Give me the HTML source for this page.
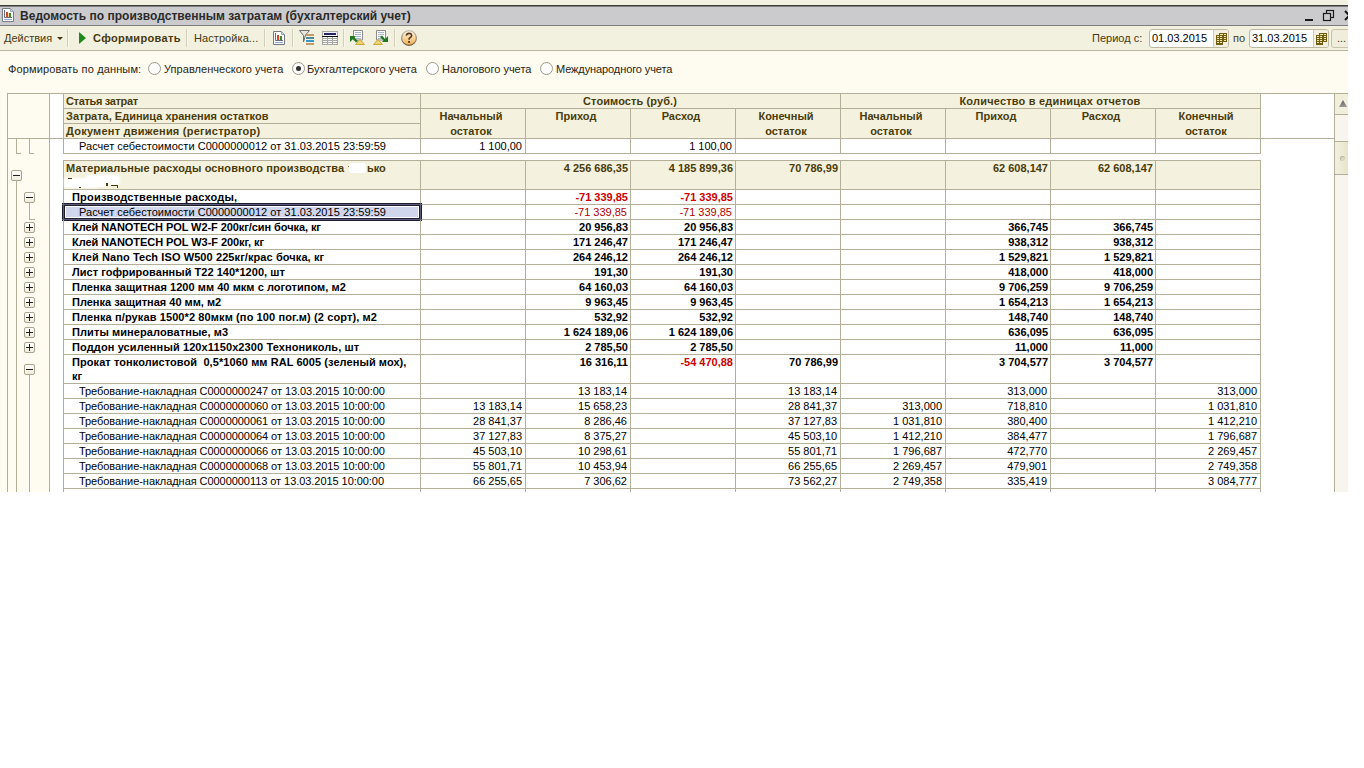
<!DOCTYPE html>
<html><head><meta charset="utf-8"><title>Ведомость</title>
<style>
html,body{margin:0;padding:0}
body{width:1364px;height:768px;position:relative;overflow:hidden;background:#FFFFFF;font-family:"Liberation Sans",sans-serif;font-size:11px}
#w{position:absolute;left:0;top:0;width:1348px;height:492px;background:#FEFBF0;overflow:hidden}
.t{position:absolute;white-space:pre;height:auto}
</style></head><body><div id="w">
<div style="position:absolute;left:0px;top:0px;width:1348px;height:5px;background:#F3F2E2;"></div>
<div style="position:absolute;left:0px;top:5px;width:1348px;height:1px;background:#3E3E3E;"></div>
<div style="position:absolute;left:0px;top:6px;width:1348px;height:1px;background:#7E7E7E;"></div>
<div style="position:absolute;left:0px;top:7px;width:1348px;height:18px;background:#CBCBCD;"></div>
<div style="position:absolute;left:0px;top:25px;width:1348px;height:1px;background:#7C7C7C;"></div>
<svg style="position:absolute;left:2px;top:8px" width="12" height="14" viewBox="0 0 12 14">
<path d="M0.5 0.5 H8.5 L11.5 3.5 V13.5 H0.5 Z" fill="#fff" stroke="#737A84"/>
<path d="M8.5 0.5 V3.5 H11.5" fill="#C8D4E0" stroke="#9AA6B4"/>
<path d="M2.5 2 V9.5 H10" fill="none" stroke="#6A6A78"/>
<rect x="4" y="4" width="2" height="5" fill="#C84A30"/><rect x="6" y="5" width="1" height="4" fill="#F0DC98"/><rect x="7" y="5" width="2" height="4" fill="#3A8A30"/>
<rect x="2" y="11" width="8" height="1" fill="#90A8C8"/></svg>
<div class="t" style="left:20px;top:9px;line-height:15px;font-size:12px;font-weight:bold;color:#2A2A2A;letter-spacing:0.02px">Ведомость по производственным затратам (бухгалтерский учет)</div>
<div style="position:absolute;left:1305px;top:19px;width:8px;height:2px;background:#1A1A1A;"></div>
<svg style="position:absolute;left:1322px;top:9px" width="13" height="13" viewBox="0 0 13 13">
<rect x="4.5" y="1.5" width="7" height="7" fill="none" stroke="#1A1A1A" stroke-width="1.2"/>
<rect x="1.5" y="4.5" width="7" height="7" fill="#CBCBCD" stroke="#1A1A1A" stroke-width="1.2"/></svg>
<svg style="position:absolute;left:1344px;top:10px" width="6" height="12" viewBox="0 0 6 12">
<path d="M1 1 L5 5 M1 10 L5 6" stroke="#1A1A1A" stroke-width="2"/></svg>
<div style="position:absolute;left:0px;top:26px;width:1348px;height:24px;background:#F2F0DE;"></div>
<div style="position:absolute;left:0px;top:50px;width:1348px;height:1px;background:#BAB6A3;"></div>
<div class="t" style="left:4px;top:31px;line-height:14px;color:#463A10">Действия</div>
<svg style="position:absolute;left:57px;top:37px" width="6" height="3" viewBox="0 0 6 3"><path d="M0 0 H6 L3 3 Z" fill="#3C3410"/></svg>
<div style="position:absolute;left:67px;top:29px;width:1px;height:18px;background:#D2CEB9;"></div>
<div style="position:absolute;left:68px;top:29px;width:1px;height:18px;background:#F9F7EC;"></div>
<svg style="position:absolute;left:79px;top:32px" width="7" height="12" viewBox="0 0 7 12"><path d="M0 0 L7 6 L0 12 Z" fill="#1E8A1E"/></svg>
<div class="t" style="left:93px;top:31px;line-height:14px;color:#463A10;font-weight:bold;letter-spacing:0.33px">Сформировать</div>
<div style="position:absolute;left:186px;top:29px;width:1px;height:18px;background:#D2CEB9;"></div>
<div style="position:absolute;left:187px;top:29px;width:1px;height:18px;background:#F9F7EC;"></div>
<div class="t" style="left:194px;top:31px;line-height:14px;color:#463A10;letter-spacing:0.08px">Настройка...</div>
<div style="position:absolute;left:264px;top:29px;width:1px;height:18px;background:#D2CEB9;"></div>
<div style="position:absolute;left:265px;top:29px;width:1px;height:18px;background:#F9F7EC;"></div>
<svg style="position:absolute;left:273px;top:31px" width="12" height="14" viewBox="0 0 12 14">
<path d="M0.5 0.5 H8.5 L11.5 3.5 V13.5 H0.5 Z" fill="#fff" stroke="#737A84"/>
<path d="M8.5 0.5 V3.5 H11.5" fill="#C8D4E0" stroke="#9AA6B4"/>
<path d="M2.5 2 V9.5 H10" fill="none" stroke="#6A6A78"/>
<rect x="4" y="4" width="2" height="5" fill="#C84A30"/><rect x="6" y="5" width="1" height="4" fill="#F0DC98"/><rect x="7" y="5" width="2" height="4" fill="#3A8A30"/>
<rect x="2" y="11" width="8" height="1" fill="#90A8C8"/></svg>
<div style="position:absolute;left:292px;top:29px;width:1px;height:18px;background:#D2CEB9;"></div>
<div style="position:absolute;left:293px;top:29px;width:1px;height:18px;background:#F9F7EC;"></div>
<svg style="position:absolute;left:299px;top:30px" width="16" height="16" viewBox="0 0 16 16">
<path d="M0.5 0.5 H10.5 L6.5 5 L4.5 12 L4.5 5.5 Z" fill="#E6E6E2" stroke="#6E6E6A" stroke-width="1"/>
<rect x="7" y="4" width="8" height="2" fill="#C89A68"/><rect x="7" y="7" width="8" height="2" fill="#4A8C9C"/><rect x="7" y="10" width="8" height="2" fill="#3898C8"/><rect x="7" y="13" width="8" height="2" fill="#C89A68"/></svg>
<svg style="position:absolute;left:322px;top:31px" width="16" height="14" viewBox="0 0 16 14">
<rect x="0" y="0" width="16" height="14" fill="#A8A8A2"/>
<rect x="1" y="1" width="14" height="4" fill="#F4F2FF"/>
<rect x="2" y="2" width="12" height="2" fill="#26245E"/>
<rect x="0" y="5" width="16" height="1" fill="#111"/>
<rect x="1" y="6" width="14" height="1" fill="#fff"/><rect x="1" y="8" width="14" height="1" fill="#fff"/><rect x="1" y="10" width="14" height="1" fill="#fff"/><rect x="1" y="12" width="14" height="1" fill="#fff"/>
<rect x="5" y="6" width="1" height="8" fill="#A8A8A2"/><rect x="10" y="6" width="1" height="8" fill="#A8A8A2"/></svg>
<div style="position:absolute;left:343px;top:29px;width:1px;height:18px;background:#D2CEB9;"></div>
<div style="position:absolute;left:344px;top:29px;width:1px;height:18px;background:#F9F7EC;"></div>
<svg style="position:absolute;left:350px;top:30px" width="16" height="16" viewBox="0 0 16 16">
<path d="M3.5 0.5 H12.5 V10 H3.5 Z" fill="#fff" stroke="#8C8C8C"/>
<path d="M5 2.5 H11 M5 4.5 H11 M6 6.5 H11 M6 8.5 H11" stroke="#A8B4CC"/>
<path d="M5.5 14.5 L10 9.5 L14.5 14.5 Z" fill="#EED46A" stroke="#C9A83A"/>
<path d="M0 6 H6 L4.5 7.5 L8 11 L6 12.5 L3 9 L0 12 Z" fill="#1F7A1F"/></svg>
<svg style="position:absolute;left:373px;top:30px" width="16" height="16" viewBox="0 0 16 16">
<path d="M3.5 0.5 H12.5 V10 H3.5 Z" fill="#fff" stroke="#8C8C8C"/>
<path d="M5 2.5 H11 M5 4.5 H11 M5 6.5 H9 M5 8.5 H9" stroke="#A8B4CC"/>
<path d="M0.5 14.5 L5 9.5 L9.5 14.5 Z" fill="#EED46A" stroke="#C9A83A"/>
<path d="M15 12 L9 12 L10.5 10.5 L7 7 L9 5.5 L12 9 L15 6 Z" fill="#1F7A1F"/></svg>
<div style="position:absolute;left:394px;top:29px;width:1px;height:18px;background:#D2CEB9;"></div>
<div style="position:absolute;left:395px;top:29px;width:1px;height:18px;background:#F9F7EC;"></div>
<svg style="position:absolute;left:401px;top:30px" width="16" height="16" viewBox="0 0 16 16">
<defs><linearGradient id="hg" x1="0" y1="0" x2="0" y2="1"><stop offset="0" stop-color="#FFF6E6"/><stop offset="0.5" stop-color="#F8D49A"/><stop offset="1" stop-color="#F0A850"/></linearGradient>
<linearGradient id="hb" x1="0" y1="0" x2="0" y2="1"><stop offset="0" stop-color="#C8C0B0"/><stop offset="1" stop-color="#6A5A40"/></linearGradient></defs>
<circle cx="8" cy="8" r="7.4" fill="url(#hg)" stroke="url(#hb)" stroke-width="1.1"/>
<path d="M5.3 5.6 Q5.6 3.4 8 3.4 Q10.6 3.4 10.6 5.6 Q10.6 7 8.9 7.8 Q8 8.3 8 9.8" fill="none" stroke="#5A3A20" stroke-width="1.6"/>
<rect x="7" y="11" width="2" height="1.8" fill="#5A3A20"/></svg>
<div class="t" style="left:1092px;top:31px;line-height:14px;color:#463A10">Период с:</div>
<div style="position:absolute;left:1149px;top:29px;width:78px;height:17px;border:1px solid #BDB8A2;border-radius:3px;background:#fff;overflow:hidden"><div style="position:absolute;left:63px;top:0;width:15px;height:17px;background:#F3F0E0;border-left:1px solid #CFCAB5"></div></div>
<svg style="position:absolute;left:1216px;top:33px" width="11" height="12" viewBox="0 0 11 12">
<rect x="3" y="0" width="8" height="9" fill="#6E5E14"/><rect x="4" y="1" width="3" height="1" fill="#F2E6A8"/><rect x="8" y="1" width="2" height="1" fill="#F2E6A8"/><rect x="4" y="3" width="3" height="1" fill="#F2E6A8"/><rect x="8" y="3" width="2" height="1" fill="#F2E6A8"/><rect x="4" y="5" width="3" height="1" fill="#F2E6A8"/><rect x="8" y="5" width="2" height="1" fill="#F2E6A8"/><rect x="4" y="7" width="3" height="1" fill="#F2E6A8"/><rect x="8" y="7" width="2" height="1" fill="#F2E6A8"/><rect x="0" y="2" width="7" height="10" fill="#6E5E14"/><rect x="1" y="3" width="2" height="1" fill="#F2E6A8"/><rect x="4" y="3" width="2" height="1" fill="#F2E6A8"/><rect x="1" y="5" width="2" height="1" fill="#F2E6A8"/><rect x="4" y="5" width="2" height="1" fill="#F2E6A8"/><rect x="1" y="7" width="2" height="1" fill="#F2E6A8"/><rect x="4" y="7" width="2" height="1" fill="#F2E6A8"/><rect x="1" y="9" width="2" height="1" fill="#F2E6A8"/><rect x="4" y="9" width="2" height="1" fill="#F2E6A8"/></svg>
<div class="t" style="left:1152px;top:31px;line-height:14px;color:#000">01.03.2015</div>
<div class="t" style="left:1233px;top:31px;line-height:14px;color:#463A10">по</div>
<div style="position:absolute;left:1249px;top:29px;width:78px;height:17px;border:1px solid #BDB8A2;border-radius:3px;background:#fff;overflow:hidden"><div style="position:absolute;left:63px;top:0;width:15px;height:17px;background:#F3F0E0;border-left:1px solid #CFCAB5"></div></div>
<svg style="position:absolute;left:1316px;top:33px" width="11" height="12" viewBox="0 0 11 12">
<rect x="3" y="0" width="8" height="9" fill="#6E5E14"/><rect x="4" y="1" width="3" height="1" fill="#F2E6A8"/><rect x="8" y="1" width="2" height="1" fill="#F2E6A8"/><rect x="4" y="3" width="3" height="1" fill="#F2E6A8"/><rect x="8" y="3" width="2" height="1" fill="#F2E6A8"/><rect x="4" y="5" width="3" height="1" fill="#F2E6A8"/><rect x="8" y="5" width="2" height="1" fill="#F2E6A8"/><rect x="4" y="7" width="3" height="1" fill="#F2E6A8"/><rect x="8" y="7" width="2" height="1" fill="#F2E6A8"/><rect x="0" y="2" width="7" height="10" fill="#6E5E14"/><rect x="1" y="3" width="2" height="1" fill="#F2E6A8"/><rect x="4" y="3" width="2" height="1" fill="#F2E6A8"/><rect x="1" y="5" width="2" height="1" fill="#F2E6A8"/><rect x="4" y="5" width="2" height="1" fill="#F2E6A8"/><rect x="1" y="7" width="2" height="1" fill="#F2E6A8"/><rect x="4" y="7" width="2" height="1" fill="#F2E6A8"/><rect x="1" y="9" width="2" height="1" fill="#F2E6A8"/><rect x="4" y="9" width="2" height="1" fill="#F2E6A8"/></svg>
<div class="t" style="left:1252px;top:31px;line-height:14px;color:#000">31.03.2015</div>
<div style="position:absolute;left:1331px;top:29px;width:30px;height:17px;border:1px solid #C8C2A8;border-radius:3px;background:#F1EDDC"></div>
<div class="t" style="left:1337px;top:31px;line-height:14px;color:#3C3410">...</div>
<div class="t" style="left:8px;top:62px;line-height:14px;color:#2A2410;letter-spacing:0.136px">Формировать по данным:</div>
<div style="position:absolute;left:148px;top:62px;width:11px;height:11px;border:1px solid #9A9A8A;border-radius:50%;background:#fff"></div>
<div class="t" style="left:164px;top:62px;line-height:14px;color:#2A2410;letter-spacing:0.05px">Управленческого учета</div>
<div style="position:absolute;left:292px;top:62px;width:11px;height:11px;border:1px solid #9A9A8A;border-radius:50%;background:#fff"></div>
<div style="position:absolute;left:296px;top:66px;width:5px;height:5px;border-radius:50%;background:#303030"></div>
<div class="t" style="left:307px;top:62px;line-height:14px;color:#2A2410;letter-spacing:0.05px">Бухгалтерского учета</div>
<div style="position:absolute;left:426px;top:62px;width:11px;height:11px;border:1px solid #9A9A8A;border-radius:50%;background:#fff"></div>
<div class="t" style="left:442px;top:62px;line-height:14px;color:#2A2410">Налогового учета</div>
<div style="position:absolute;left:540px;top:62px;width:11px;height:11px;border:1px solid #9A9A8A;border-radius:50%;background:#fff"></div>
<div class="t" style="left:556px;top:62px;line-height:14px;color:#2A2410;letter-spacing:-0.1px">Международного учета</div>
<div style="position:absolute;left:7px;top:93px;width:1341px;height:399px;background:#FEFBF0;"></div>
<div style="position:absolute;left:50px;top:94px;width:13px;height:398px;background:#FFFFFF;"></div>
<div style="position:absolute;left:63px;top:94px;width:1271px;height:398px;background:#FFFFFF;"></div>
<div style="position:absolute;left:7px;top:93px;width:1342px;height:1px;background:#B3AF99;"></div>
<div style="position:absolute;left:7px;top:93px;width:1px;height:399px;background:#B3AF99;"></div>
<div style="position:absolute;left:49px;top:94px;width:1px;height:398px;background:#B3AF99;"></div>
<div style="position:absolute;left:64px;top:94px;width:1196px;height:44px;background:#F4F1DE;"></div>
<div style="position:absolute;left:8px;top:138px;width:1327px;height:1px;background:#B3AF99;"></div>
<div style="position:absolute;left:63px;top:94px;width:1px;height:60px;background:#B3AF99;"></div>
<div style="position:absolute;left:63px;top:108px;width:358px;height:1px;background:#B3AF99;"></div>
<div style="position:absolute;left:63px;top:123px;width:358px;height:1px;background:#B3AF99;"></div>
<div style="position:absolute;left:420px;top:108px;width:841px;height:1px;background:#B3AF99;"></div>
<div style="position:absolute;left:420px;top:94px;width:1px;height:44px;background:#B3AF99;"></div>
<div style="position:absolute;left:840px;top:94px;width:1px;height:44px;background:#B3AF99;"></div>
<div style="position:absolute;left:1260px;top:94px;width:1px;height:44px;background:#B3AF99;"></div>
<div style="position:absolute;left:525px;top:108px;width:1px;height:30px;background:#B3AF99;"></div>
<div style="position:absolute;left:630px;top:108px;width:1px;height:30px;background:#B3AF99;"></div>
<div style="position:absolute;left:735px;top:108px;width:1px;height:30px;background:#B3AF99;"></div>
<div style="position:absolute;left:945px;top:108px;width:1px;height:30px;background:#B3AF99;"></div>
<div style="position:absolute;left:1050px;top:108px;width:1px;height:30px;background:#B3AF99;"></div>
<div style="position:absolute;left:1155px;top:108px;width:1px;height:30px;background:#B3AF99;"></div>
<div class="t" style="left:66px;top:94px;line-height:14px;color:#4A3C0A;font-weight:bold;letter-spacing:-0.33px">Статья затрат</div>
<div class="t" style="left:66px;top:109px;line-height:14px;color:#4A3C0A;font-weight:bold">Затрата, Единица хранения остатков</div>
<div class="t" style="left:66px;top:124px;line-height:14px;color:#4A3C0A;font-weight:bold;letter-spacing:0.23px">Документ движения (регистратор)</div>
<div class="t" style="left:480px;top:94px;width:300px;text-align:center;line-height:14px;color:#4A3C0A;font-weight:bold;letter-spacing:0.09px">Стоимость (руб.)</div>
<div class="t" style="left:900px;top:94px;width:300px;text-align:center;line-height:14px;color:#4A3C0A;font-weight:bold;letter-spacing:0.2px">Количество в единицах отчетов</div>
<div class="t" style="left:419px;top:109px;width:104px;text-align:center;line-height:14px;color:#4A3C0A;font-weight:bold">Начальный</div>
<div class="t" style="left:419px;top:124px;width:104px;text-align:center;line-height:14px;color:#4A3C0A;font-weight:bold">остаток</div>
<div class="t" style="left:524px;top:109px;width:104px;text-align:center;line-height:14px;color:#4A3C0A;font-weight:bold">Приход</div>
<div class="t" style="left:629px;top:109px;width:104px;text-align:center;line-height:14px;color:#4A3C0A;font-weight:bold">Расход</div>
<div class="t" style="left:734px;top:109px;width:104px;text-align:center;line-height:14px;color:#4A3C0A;font-weight:bold">Конечный</div>
<div class="t" style="left:734px;top:124px;width:104px;text-align:center;line-height:14px;color:#4A3C0A;font-weight:bold">остаток</div>
<div class="t" style="left:839px;top:109px;width:104px;text-align:center;line-height:14px;color:#4A3C0A;font-weight:bold">Начальный</div>
<div class="t" style="left:839px;top:124px;width:104px;text-align:center;line-height:14px;color:#4A3C0A;font-weight:bold">остаток</div>
<div class="t" style="left:944px;top:109px;width:104px;text-align:center;line-height:14px;color:#4A3C0A;font-weight:bold">Приход</div>
<div class="t" style="left:1049px;top:109px;width:104px;text-align:center;line-height:14px;color:#4A3C0A;font-weight:bold">Расход</div>
<div class="t" style="left:1154px;top:109px;width:104px;text-align:center;line-height:14px;color:#4A3C0A;font-weight:bold">Конечный</div>
<div class="t" style="left:1154px;top:124px;width:104px;text-align:center;line-height:14px;color:#4A3C0A;font-weight:bold">остаток</div>
<div style="position:absolute;left:1334px;top:94px;width:1px;height:398px;background:#B3AF99;"></div>
<div style="position:absolute;left:1335px;top:94px;width:13px;height:398px;background:#F7F5EE;"></div>
<div style="position:absolute;left:1335px;top:94px;width:13px;height:20px;background:#F1EEDC;"></div>
<div style="position:absolute;left:1335px;top:114px;width:13px;height:1px;background:#B3AF99;"></div>
<svg style="position:absolute;left:1339px;top:100px" width="8" height="7" viewBox="0 0 8 7"><defs><linearGradient id="sg" x1="0" y1="0" x2="0" y2="1"><stop offset="0" stop-color="#606060"/><stop offset="1" stop-color="#9A9A96"/></linearGradient></defs><path d="M4 0 L8 7 H0 Z" fill="url(#sg)"/></svg>
<div style="position:absolute;left:1335px;top:141px;width:13px;height:1px;background:#B3AF99;"></div>
<div style="position:absolute;left:1335px;top:142px;width:13px;height:32px;background:#EDE9D2;background:linear-gradient(90deg,#F3F0E0,#E8E4CA)"></div>
<div style="position:absolute;left:1335px;top:174px;width:13px;height:1px;background:#B3AF99;"></div>
<div style="position:absolute;left:1340px;top:156px;width:4px;height:4px;border-radius:50%;border-left:1px solid #B8B4A0;border-top:1px solid #B8B4A0;background:#DCD8C4"></div>
<div style="position:absolute;left:63px;top:153px;width:1198px;height:1px;background:#B3AF99;"></div>
<div style="position:absolute;left:63px;top:139px;width:1px;height:14px;background:#B3AF99;"></div>
<div style="position:absolute;left:420px;top:139px;width:1px;height:14px;background:#B3AF99;"></div>
<div style="position:absolute;left:525px;top:139px;width:1px;height:14px;background:#B3AF99;"></div>
<div style="position:absolute;left:630px;top:139px;width:1px;height:14px;background:#B3AF99;"></div>
<div style="position:absolute;left:735px;top:139px;width:1px;height:14px;background:#B3AF99;"></div>
<div style="position:absolute;left:840px;top:139px;width:1px;height:14px;background:#B3AF99;"></div>
<div style="position:absolute;left:945px;top:139px;width:1px;height:14px;background:#B3AF99;"></div>
<div style="position:absolute;left:1050px;top:139px;width:1px;height:14px;background:#B3AF99;"></div>
<div style="position:absolute;left:1155px;top:139px;width:1px;height:14px;background:#B3AF99;"></div>
<div style="position:absolute;left:1260px;top:139px;width:1px;height:14px;background:#B3AF99;"></div>
<div class="t" style="left:79px;top:139px;line-height:14px;color:#000;letter-spacing:0.036px">Расчет себестоимости С0000000012 от 31.03.2015 23:59:59</div>
<div class="t" style="left:222px;top:139px;width:300px;text-align:right;line-height:14px;color:#000">1 100,00</div>
<div class="t" style="left:432px;top:139px;width:300px;text-align:right;line-height:14px;color:#000">1 100,00</div>
<div style="position:absolute;left:16px;top:139px;width:1px;height:15px;background:#B3AF99;"></div>
<div style="position:absolute;left:16px;top:153px;width:5px;height:1px;background:#B3AF99;"></div>
<div style="position:absolute;left:29px;top:139px;width:1px;height:15px;background:#B3AF99;"></div>
<div style="position:absolute;left:29px;top:153px;width:5px;height:1px;background:#B3AF99;"></div>
<div style="position:absolute;left:63px;top:160px;width:1198px;height:1px;background:#B3AF99;"></div>
<div style="position:absolute;left:64px;top:161px;width:1196px;height:28px;background:#F4F1DE;"></div>
<div style="position:absolute;left:63px;top:189px;width:1198px;height:1px;background:#B3AF99;"></div>
<div style="position:absolute;left:63px;top:161px;width:1px;height:28px;background:#B3AF99;"></div>
<div style="position:absolute;left:420px;top:161px;width:1px;height:28px;background:#B3AF99;"></div>
<div style="position:absolute;left:525px;top:161px;width:1px;height:28px;background:#B3AF99;"></div>
<div style="position:absolute;left:630px;top:161px;width:1px;height:28px;background:#B3AF99;"></div>
<div style="position:absolute;left:735px;top:161px;width:1px;height:28px;background:#B3AF99;"></div>
<div style="position:absolute;left:840px;top:161px;width:1px;height:28px;background:#B3AF99;"></div>
<div style="position:absolute;left:945px;top:161px;width:1px;height:28px;background:#B3AF99;"></div>
<div style="position:absolute;left:1050px;top:161px;width:1px;height:28px;background:#B3AF99;"></div>
<div style="position:absolute;left:1155px;top:161px;width:1px;height:28px;background:#B3AF99;"></div>
<div style="position:absolute;left:1260px;top:161px;width:1px;height:28px;background:#B3AF99;"></div>
<div class="t" style="left:66px;top:161px;line-height:14px;color:#4A3C0A;font-weight:bold;letter-spacing:0.119px">Материальные расходы основного производства</div>
<div class="t" style="left:367px;top:161px;line-height:14px;color:#4A3C0A;font-weight:bold">ько</div>
<div style="position:absolute;left:349px;top:163px;width:17px;height:10px;background:#FFFFFF;border-radius:3px"></div>
<div style="position:absolute;left:348px;top:166px;width:1px;height:1px;background:#8A7A50;"></div>
<div style="position:absolute;left:64px;top:178px;width:34px;height:10px;background:#FFFFFF;border-radius:2px;filter:blur(0.8px)"></div>
<div style="position:absolute;left:86px;top:175px;width:34px;height:10px;background:#FFFFFF;border-radius:3px;filter:blur(0.8px)"></div>
<div style="position:absolute;left:66px;top:180px;width:40px;height:7px;background:#FFFFFF;"></div>
<div style="position:absolute;left:68px;top:178px;width:4px;height:1px;background:#4A3C0A;"></div>
<div style="position:absolute;left:79px;top:187px;width:2px;height:1px;background:#4A3C0A;"></div>
<div style="position:absolute;left:106px;top:183px;width:2px;height:3px;background:#4A3C0A;"></div>
<div style="position:absolute;left:111px;top:185px;width:7px;height:1px;background:#4A3C0A;"></div>
<div style="position:absolute;left:117px;top:185px;width:1px;height:3px;background:#4A3C0A;"></div>
<div class="t" style="left:328px;top:161px;width:300px;text-align:right;line-height:14px;color:#4A3C0A;font-weight:bold">4 256 686,35</div>
<div class="t" style="left:433px;top:161px;width:300px;text-align:right;line-height:14px;color:#4A3C0A;font-weight:bold">4 185 899,36</div>
<div class="t" style="left:538px;top:161px;width:300px;text-align:right;line-height:14px;color:#4A3C0A;font-weight:bold">70 786,99</div>
<div class="t" style="left:748px;top:161px;width:300px;text-align:right;line-height:14px;color:#4A3C0A;font-weight:bold">62 608,147</div>
<div class="t" style="left:853px;top:161px;width:300px;text-align:right;line-height:14px;color:#4A3C0A;font-weight:bold">62 608,147</div>
<div style="position:absolute;left:11px;top:170px;width:9px;height:9px;border:1px solid #A8A48E;border-radius:2px;background:linear-gradient(#FFFFFF,#F0ECDC)"></div>
<div style="position:absolute;left:13px;top:175px;width:7px;height:1px;background:#202020;"></div>
<div style="position:absolute;left:16px;top:181px;width:1px;height:311px;background:#B3AF99;"></div>
<div style="position:absolute;left:63px;top:204px;width:1198px;height:1px;background:#B3AF99;"></div>
<div style="position:absolute;left:63px;top:190px;width:1px;height:14px;background:#B3AF99;"></div>
<div style="position:absolute;left:420px;top:190px;width:1px;height:14px;background:#B3AF99;"></div>
<div style="position:absolute;left:525px;top:190px;width:1px;height:14px;background:#B3AF99;"></div>
<div style="position:absolute;left:630px;top:190px;width:1px;height:14px;background:#B3AF99;"></div>
<div style="position:absolute;left:735px;top:190px;width:1px;height:14px;background:#B3AF99;"></div>
<div style="position:absolute;left:840px;top:190px;width:1px;height:14px;background:#B3AF99;"></div>
<div style="position:absolute;left:945px;top:190px;width:1px;height:14px;background:#B3AF99;"></div>
<div style="position:absolute;left:1050px;top:190px;width:1px;height:14px;background:#B3AF99;"></div>
<div style="position:absolute;left:1155px;top:190px;width:1px;height:14px;background:#B3AF99;"></div>
<div style="position:absolute;left:1260px;top:190px;width:1px;height:14px;background:#B3AF99;"></div>
<div class="t" style="left:72px;top:190px;line-height:14px;color:#000;font-weight:bold;letter-spacing:0.2px">Производственные расходы,</div>
<div class="t" style="left:328px;top:190px;width:300px;text-align:right;line-height:14px;color:#CC0000;font-weight:bold">-71 339,85</div>
<div class="t" style="left:433px;top:190px;width:300px;text-align:right;line-height:14px;color:#CC0000;font-weight:bold">-71 339,85</div>
<div style="position:absolute;left:24px;top:192px;width:9px;height:9px;border:1px solid #A8A48E;border-radius:2px;background:linear-gradient(#FFFFFF,#F0ECDC)"></div>
<div style="position:absolute;left:26px;top:197px;width:7px;height:1px;background:#202020;"></div>
<div style="position:absolute;left:29px;top:203px;width:1px;height:17px;background:#B3AF99;"></div>
<div style="position:absolute;left:29px;top:219px;width:6px;height:1px;background:#B3AF99;"></div>
<div style="position:absolute;left:63px;top:219px;width:1198px;height:1px;background:#B3AF99;"></div>
<div style="position:absolute;left:63px;top:205px;width:1px;height:14px;background:#B3AF99;"></div>
<div style="position:absolute;left:420px;top:205px;width:1px;height:14px;background:#B3AF99;"></div>
<div style="position:absolute;left:525px;top:205px;width:1px;height:14px;background:#B3AF99;"></div>
<div style="position:absolute;left:630px;top:205px;width:1px;height:14px;background:#B3AF99;"></div>
<div style="position:absolute;left:735px;top:205px;width:1px;height:14px;background:#B3AF99;"></div>
<div style="position:absolute;left:840px;top:205px;width:1px;height:14px;background:#B3AF99;"></div>
<div style="position:absolute;left:945px;top:205px;width:1px;height:14px;background:#B3AF99;"></div>
<div style="position:absolute;left:1050px;top:205px;width:1px;height:14px;background:#B3AF99;"></div>
<div style="position:absolute;left:1155px;top:205px;width:1px;height:14px;background:#B3AF99;"></div>
<div style="position:absolute;left:1260px;top:205px;width:1px;height:14px;background:#B3AF99;"></div>
<div class="t" style="left:327px;top:205px;width:300px;text-align:right;line-height:14px;color:#B00000">-71 339,85</div>
<div class="t" style="left:432px;top:205px;width:300px;text-align:right;line-height:14px;color:#B00000">-71 339,85</div>
<div style="position:absolute;left:62px;top:203px;width:354px;height:12px;border:3px solid #1C1C2E;background:#D0D6EC;box-shadow:inset 0 0 0 1px #fff"></div>
<div style="position:absolute;left:62px;top:204px;width:360px;height:1px;background:#5E5E78;"></div>
<div style="position:absolute;left:62px;top:219px;width:360px;height:1px;background:#5E5E78;"></div>
<div style="position:absolute;left:63px;top:203px;width:1px;height:18px;background:#5E5E78;"></div>
<div style="position:absolute;left:420px;top:203px;width:1px;height:18px;background:#5E5E78;"></div>
<div class="t" style="left:79px;top:205px;line-height:14px;color:#000;letter-spacing:0.036px">Расчет себестоимости С0000000012 от 31.03.2015 23:59:59</div>
<div style="position:absolute;left:63px;top:234px;width:1198px;height:1px;background:#B3AF99;"></div>
<div style="position:absolute;left:63px;top:220px;width:1px;height:14px;background:#B3AF99;"></div>
<div style="position:absolute;left:420px;top:220px;width:1px;height:14px;background:#B3AF99;"></div>
<div style="position:absolute;left:525px;top:220px;width:1px;height:14px;background:#B3AF99;"></div>
<div style="position:absolute;left:630px;top:220px;width:1px;height:14px;background:#B3AF99;"></div>
<div style="position:absolute;left:735px;top:220px;width:1px;height:14px;background:#B3AF99;"></div>
<div style="position:absolute;left:840px;top:220px;width:1px;height:14px;background:#B3AF99;"></div>
<div style="position:absolute;left:945px;top:220px;width:1px;height:14px;background:#B3AF99;"></div>
<div style="position:absolute;left:1050px;top:220px;width:1px;height:14px;background:#B3AF99;"></div>
<div style="position:absolute;left:1155px;top:220px;width:1px;height:14px;background:#B3AF99;"></div>
<div style="position:absolute;left:1260px;top:220px;width:1px;height:14px;background:#B3AF99;"></div>
<div class="t" style="left:72px;top:220px;line-height:14px;color:#000;font-weight:bold;letter-spacing:-0.07px">Клей NANOTECH POL W2-F 200кг/син бочка, кг</div>
<div class="t" style="left:328px;top:220px;width:300px;text-align:right;line-height:14px;color:#000;font-weight:bold">20 956,83</div>
<div class="t" style="left:433px;top:220px;width:300px;text-align:right;line-height:14px;color:#000;font-weight:bold">20 956,83</div>
<div class="t" style="left:748px;top:220px;width:300px;text-align:right;line-height:14px;color:#000;font-weight:bold">366,745</div>
<div class="t" style="left:853px;top:220px;width:300px;text-align:right;line-height:14px;color:#000;font-weight:bold">366,745</div>
<div style="position:absolute;left:24px;top:222px;width:9px;height:9px;border:1px solid #A8A48E;border-radius:2px;background:linear-gradient(#FFFFFF,#F0ECDC)"></div>
<div style="position:absolute;left:26px;top:227px;width:7px;height:1px;background:#202020;"></div>
<div style="position:absolute;left:29px;top:224px;width:1px;height:7px;background:#202020;"></div>
<div style="position:absolute;left:63px;top:249px;width:1198px;height:1px;background:#B3AF99;"></div>
<div style="position:absolute;left:63px;top:235px;width:1px;height:14px;background:#B3AF99;"></div>
<div style="position:absolute;left:420px;top:235px;width:1px;height:14px;background:#B3AF99;"></div>
<div style="position:absolute;left:525px;top:235px;width:1px;height:14px;background:#B3AF99;"></div>
<div style="position:absolute;left:630px;top:235px;width:1px;height:14px;background:#B3AF99;"></div>
<div style="position:absolute;left:735px;top:235px;width:1px;height:14px;background:#B3AF99;"></div>
<div style="position:absolute;left:840px;top:235px;width:1px;height:14px;background:#B3AF99;"></div>
<div style="position:absolute;left:945px;top:235px;width:1px;height:14px;background:#B3AF99;"></div>
<div style="position:absolute;left:1050px;top:235px;width:1px;height:14px;background:#B3AF99;"></div>
<div style="position:absolute;left:1155px;top:235px;width:1px;height:14px;background:#B3AF99;"></div>
<div style="position:absolute;left:1260px;top:235px;width:1px;height:14px;background:#B3AF99;"></div>
<div class="t" style="left:72px;top:235px;line-height:14px;color:#000;font-weight:bold;letter-spacing:-0.06px">Клей NANOTECH POL W3-F 200кг, кг</div>
<div class="t" style="left:328px;top:235px;width:300px;text-align:right;line-height:14px;color:#000;font-weight:bold">171 246,47</div>
<div class="t" style="left:433px;top:235px;width:300px;text-align:right;line-height:14px;color:#000;font-weight:bold">171 246,47</div>
<div class="t" style="left:748px;top:235px;width:300px;text-align:right;line-height:14px;color:#000;font-weight:bold">938,312</div>
<div class="t" style="left:853px;top:235px;width:300px;text-align:right;line-height:14px;color:#000;font-weight:bold">938,312</div>
<div style="position:absolute;left:24px;top:237px;width:9px;height:9px;border:1px solid #A8A48E;border-radius:2px;background:linear-gradient(#FFFFFF,#F0ECDC)"></div>
<div style="position:absolute;left:26px;top:242px;width:7px;height:1px;background:#202020;"></div>
<div style="position:absolute;left:29px;top:239px;width:1px;height:7px;background:#202020;"></div>
<div style="position:absolute;left:63px;top:264px;width:1198px;height:1px;background:#B3AF99;"></div>
<div style="position:absolute;left:63px;top:250px;width:1px;height:14px;background:#B3AF99;"></div>
<div style="position:absolute;left:420px;top:250px;width:1px;height:14px;background:#B3AF99;"></div>
<div style="position:absolute;left:525px;top:250px;width:1px;height:14px;background:#B3AF99;"></div>
<div style="position:absolute;left:630px;top:250px;width:1px;height:14px;background:#B3AF99;"></div>
<div style="position:absolute;left:735px;top:250px;width:1px;height:14px;background:#B3AF99;"></div>
<div style="position:absolute;left:840px;top:250px;width:1px;height:14px;background:#B3AF99;"></div>
<div style="position:absolute;left:945px;top:250px;width:1px;height:14px;background:#B3AF99;"></div>
<div style="position:absolute;left:1050px;top:250px;width:1px;height:14px;background:#B3AF99;"></div>
<div style="position:absolute;left:1155px;top:250px;width:1px;height:14px;background:#B3AF99;"></div>
<div style="position:absolute;left:1260px;top:250px;width:1px;height:14px;background:#B3AF99;"></div>
<div class="t" style="left:72px;top:250px;line-height:14px;color:#000;font-weight:bold;letter-spacing:0.09px">Клей Nano Tech ISO W500 225кг/крас бочка, кг</div>
<div class="t" style="left:328px;top:250px;width:300px;text-align:right;line-height:14px;color:#000;font-weight:bold">264 246,12</div>
<div class="t" style="left:433px;top:250px;width:300px;text-align:right;line-height:14px;color:#000;font-weight:bold">264 246,12</div>
<div class="t" style="left:748px;top:250px;width:300px;text-align:right;line-height:14px;color:#000;font-weight:bold">1 529,821</div>
<div class="t" style="left:853px;top:250px;width:300px;text-align:right;line-height:14px;color:#000;font-weight:bold">1 529,821</div>
<div style="position:absolute;left:24px;top:252px;width:9px;height:9px;border:1px solid #A8A48E;border-radius:2px;background:linear-gradient(#FFFFFF,#F0ECDC)"></div>
<div style="position:absolute;left:26px;top:257px;width:7px;height:1px;background:#202020;"></div>
<div style="position:absolute;left:29px;top:254px;width:1px;height:7px;background:#202020;"></div>
<div style="position:absolute;left:63px;top:279px;width:1198px;height:1px;background:#B3AF99;"></div>
<div style="position:absolute;left:63px;top:265px;width:1px;height:14px;background:#B3AF99;"></div>
<div style="position:absolute;left:420px;top:265px;width:1px;height:14px;background:#B3AF99;"></div>
<div style="position:absolute;left:525px;top:265px;width:1px;height:14px;background:#B3AF99;"></div>
<div style="position:absolute;left:630px;top:265px;width:1px;height:14px;background:#B3AF99;"></div>
<div style="position:absolute;left:735px;top:265px;width:1px;height:14px;background:#B3AF99;"></div>
<div style="position:absolute;left:840px;top:265px;width:1px;height:14px;background:#B3AF99;"></div>
<div style="position:absolute;left:945px;top:265px;width:1px;height:14px;background:#B3AF99;"></div>
<div style="position:absolute;left:1050px;top:265px;width:1px;height:14px;background:#B3AF99;"></div>
<div style="position:absolute;left:1155px;top:265px;width:1px;height:14px;background:#B3AF99;"></div>
<div style="position:absolute;left:1260px;top:265px;width:1px;height:14px;background:#B3AF99;"></div>
<div class="t" style="left:72px;top:265px;line-height:14px;color:#000;font-weight:bold;letter-spacing:0.03px">Лист гофрированный Т22 140*1200, шт</div>
<div class="t" style="left:328px;top:265px;width:300px;text-align:right;line-height:14px;color:#000;font-weight:bold">191,30</div>
<div class="t" style="left:433px;top:265px;width:300px;text-align:right;line-height:14px;color:#000;font-weight:bold">191,30</div>
<div class="t" style="left:748px;top:265px;width:300px;text-align:right;line-height:14px;color:#000;font-weight:bold">418,000</div>
<div class="t" style="left:853px;top:265px;width:300px;text-align:right;line-height:14px;color:#000;font-weight:bold">418,000</div>
<div style="position:absolute;left:24px;top:267px;width:9px;height:9px;border:1px solid #A8A48E;border-radius:2px;background:linear-gradient(#FFFFFF,#F0ECDC)"></div>
<div style="position:absolute;left:26px;top:272px;width:7px;height:1px;background:#202020;"></div>
<div style="position:absolute;left:29px;top:269px;width:1px;height:7px;background:#202020;"></div>
<div style="position:absolute;left:63px;top:294px;width:1198px;height:1px;background:#B3AF99;"></div>
<div style="position:absolute;left:63px;top:280px;width:1px;height:14px;background:#B3AF99;"></div>
<div style="position:absolute;left:420px;top:280px;width:1px;height:14px;background:#B3AF99;"></div>
<div style="position:absolute;left:525px;top:280px;width:1px;height:14px;background:#B3AF99;"></div>
<div style="position:absolute;left:630px;top:280px;width:1px;height:14px;background:#B3AF99;"></div>
<div style="position:absolute;left:735px;top:280px;width:1px;height:14px;background:#B3AF99;"></div>
<div style="position:absolute;left:840px;top:280px;width:1px;height:14px;background:#B3AF99;"></div>
<div style="position:absolute;left:945px;top:280px;width:1px;height:14px;background:#B3AF99;"></div>
<div style="position:absolute;left:1050px;top:280px;width:1px;height:14px;background:#B3AF99;"></div>
<div style="position:absolute;left:1155px;top:280px;width:1px;height:14px;background:#B3AF99;"></div>
<div style="position:absolute;left:1260px;top:280px;width:1px;height:14px;background:#B3AF99;"></div>
<div class="t" style="left:72px;top:280px;line-height:14px;color:#000;font-weight:bold;letter-spacing:0.044px">Пленка защитная 1200 мм 40 мкм с логотипом, м2</div>
<div class="t" style="left:328px;top:280px;width:300px;text-align:right;line-height:14px;color:#000;font-weight:bold">64 160,03</div>
<div class="t" style="left:433px;top:280px;width:300px;text-align:right;line-height:14px;color:#000;font-weight:bold">64 160,03</div>
<div class="t" style="left:748px;top:280px;width:300px;text-align:right;line-height:14px;color:#000;font-weight:bold">9 706,259</div>
<div class="t" style="left:853px;top:280px;width:300px;text-align:right;line-height:14px;color:#000;font-weight:bold">9 706,259</div>
<div style="position:absolute;left:24px;top:282px;width:9px;height:9px;border:1px solid #A8A48E;border-radius:2px;background:linear-gradient(#FFFFFF,#F0ECDC)"></div>
<div style="position:absolute;left:26px;top:287px;width:7px;height:1px;background:#202020;"></div>
<div style="position:absolute;left:29px;top:284px;width:1px;height:7px;background:#202020;"></div>
<div style="position:absolute;left:63px;top:309px;width:1198px;height:1px;background:#B3AF99;"></div>
<div style="position:absolute;left:63px;top:295px;width:1px;height:14px;background:#B3AF99;"></div>
<div style="position:absolute;left:420px;top:295px;width:1px;height:14px;background:#B3AF99;"></div>
<div style="position:absolute;left:525px;top:295px;width:1px;height:14px;background:#B3AF99;"></div>
<div style="position:absolute;left:630px;top:295px;width:1px;height:14px;background:#B3AF99;"></div>
<div style="position:absolute;left:735px;top:295px;width:1px;height:14px;background:#B3AF99;"></div>
<div style="position:absolute;left:840px;top:295px;width:1px;height:14px;background:#B3AF99;"></div>
<div style="position:absolute;left:945px;top:295px;width:1px;height:14px;background:#B3AF99;"></div>
<div style="position:absolute;left:1050px;top:295px;width:1px;height:14px;background:#B3AF99;"></div>
<div style="position:absolute;left:1155px;top:295px;width:1px;height:14px;background:#B3AF99;"></div>
<div style="position:absolute;left:1260px;top:295px;width:1px;height:14px;background:#B3AF99;"></div>
<div class="t" style="left:72px;top:295px;line-height:14px;color:#000;font-weight:bold">Пленка защитная 40 мм, м2</div>
<div class="t" style="left:328px;top:295px;width:300px;text-align:right;line-height:14px;color:#000;font-weight:bold">9 963,45</div>
<div class="t" style="left:433px;top:295px;width:300px;text-align:right;line-height:14px;color:#000;font-weight:bold">9 963,45</div>
<div class="t" style="left:748px;top:295px;width:300px;text-align:right;line-height:14px;color:#000;font-weight:bold">1 654,213</div>
<div class="t" style="left:853px;top:295px;width:300px;text-align:right;line-height:14px;color:#000;font-weight:bold">1 654,213</div>
<div style="position:absolute;left:24px;top:297px;width:9px;height:9px;border:1px solid #A8A48E;border-radius:2px;background:linear-gradient(#FFFFFF,#F0ECDC)"></div>
<div style="position:absolute;left:26px;top:302px;width:7px;height:1px;background:#202020;"></div>
<div style="position:absolute;left:29px;top:299px;width:1px;height:7px;background:#202020;"></div>
<div style="position:absolute;left:63px;top:324px;width:1198px;height:1px;background:#B3AF99;"></div>
<div style="position:absolute;left:63px;top:310px;width:1px;height:14px;background:#B3AF99;"></div>
<div style="position:absolute;left:420px;top:310px;width:1px;height:14px;background:#B3AF99;"></div>
<div style="position:absolute;left:525px;top:310px;width:1px;height:14px;background:#B3AF99;"></div>
<div style="position:absolute;left:630px;top:310px;width:1px;height:14px;background:#B3AF99;"></div>
<div style="position:absolute;left:735px;top:310px;width:1px;height:14px;background:#B3AF99;"></div>
<div style="position:absolute;left:840px;top:310px;width:1px;height:14px;background:#B3AF99;"></div>
<div style="position:absolute;left:945px;top:310px;width:1px;height:14px;background:#B3AF99;"></div>
<div style="position:absolute;left:1050px;top:310px;width:1px;height:14px;background:#B3AF99;"></div>
<div style="position:absolute;left:1155px;top:310px;width:1px;height:14px;background:#B3AF99;"></div>
<div style="position:absolute;left:1260px;top:310px;width:1px;height:14px;background:#B3AF99;"></div>
<div class="t" style="left:72px;top:310px;line-height:14px;color:#000;font-weight:bold;letter-spacing:0.11px">Пленка п/рукав 1500*2 80мкм (по 100 пог.м) (2 сорт), м2</div>
<div class="t" style="left:328px;top:310px;width:300px;text-align:right;line-height:14px;color:#000;font-weight:bold">532,92</div>
<div class="t" style="left:433px;top:310px;width:300px;text-align:right;line-height:14px;color:#000;font-weight:bold">532,92</div>
<div class="t" style="left:748px;top:310px;width:300px;text-align:right;line-height:14px;color:#000;font-weight:bold">148,740</div>
<div class="t" style="left:853px;top:310px;width:300px;text-align:right;line-height:14px;color:#000;font-weight:bold">148,740</div>
<div style="position:absolute;left:24px;top:312px;width:9px;height:9px;border:1px solid #A8A48E;border-radius:2px;background:linear-gradient(#FFFFFF,#F0ECDC)"></div>
<div style="position:absolute;left:26px;top:317px;width:7px;height:1px;background:#202020;"></div>
<div style="position:absolute;left:29px;top:314px;width:1px;height:7px;background:#202020;"></div>
<div style="position:absolute;left:63px;top:339px;width:1198px;height:1px;background:#B3AF99;"></div>
<div style="position:absolute;left:63px;top:325px;width:1px;height:14px;background:#B3AF99;"></div>
<div style="position:absolute;left:420px;top:325px;width:1px;height:14px;background:#B3AF99;"></div>
<div style="position:absolute;left:525px;top:325px;width:1px;height:14px;background:#B3AF99;"></div>
<div style="position:absolute;left:630px;top:325px;width:1px;height:14px;background:#B3AF99;"></div>
<div style="position:absolute;left:735px;top:325px;width:1px;height:14px;background:#B3AF99;"></div>
<div style="position:absolute;left:840px;top:325px;width:1px;height:14px;background:#B3AF99;"></div>
<div style="position:absolute;left:945px;top:325px;width:1px;height:14px;background:#B3AF99;"></div>
<div style="position:absolute;left:1050px;top:325px;width:1px;height:14px;background:#B3AF99;"></div>
<div style="position:absolute;left:1155px;top:325px;width:1px;height:14px;background:#B3AF99;"></div>
<div style="position:absolute;left:1260px;top:325px;width:1px;height:14px;background:#B3AF99;"></div>
<div class="t" style="left:72px;top:325px;line-height:14px;color:#000;font-weight:bold;letter-spacing:0.087px">Плиты минераловатные, м3</div>
<div class="t" style="left:328px;top:325px;width:300px;text-align:right;line-height:14px;color:#000;font-weight:bold">1 624 189,06</div>
<div class="t" style="left:433px;top:325px;width:300px;text-align:right;line-height:14px;color:#000;font-weight:bold">1 624 189,06</div>
<div class="t" style="left:748px;top:325px;width:300px;text-align:right;line-height:14px;color:#000;font-weight:bold">636,095</div>
<div class="t" style="left:853px;top:325px;width:300px;text-align:right;line-height:14px;color:#000;font-weight:bold">636,095</div>
<div style="position:absolute;left:24px;top:327px;width:9px;height:9px;border:1px solid #A8A48E;border-radius:2px;background:linear-gradient(#FFFFFF,#F0ECDC)"></div>
<div style="position:absolute;left:26px;top:332px;width:7px;height:1px;background:#202020;"></div>
<div style="position:absolute;left:29px;top:329px;width:1px;height:7px;background:#202020;"></div>
<div style="position:absolute;left:63px;top:354px;width:1198px;height:1px;background:#B3AF99;"></div>
<div style="position:absolute;left:63px;top:340px;width:1px;height:14px;background:#B3AF99;"></div>
<div style="position:absolute;left:420px;top:340px;width:1px;height:14px;background:#B3AF99;"></div>
<div style="position:absolute;left:525px;top:340px;width:1px;height:14px;background:#B3AF99;"></div>
<div style="position:absolute;left:630px;top:340px;width:1px;height:14px;background:#B3AF99;"></div>
<div style="position:absolute;left:735px;top:340px;width:1px;height:14px;background:#B3AF99;"></div>
<div style="position:absolute;left:840px;top:340px;width:1px;height:14px;background:#B3AF99;"></div>
<div style="position:absolute;left:945px;top:340px;width:1px;height:14px;background:#B3AF99;"></div>
<div style="position:absolute;left:1050px;top:340px;width:1px;height:14px;background:#B3AF99;"></div>
<div style="position:absolute;left:1155px;top:340px;width:1px;height:14px;background:#B3AF99;"></div>
<div style="position:absolute;left:1260px;top:340px;width:1px;height:14px;background:#B3AF99;"></div>
<div class="t" style="left:72px;top:340px;line-height:14px;color:#000;font-weight:bold;letter-spacing:0.11px">Поддон усиленный 120х1150х2300 Технониколь, шт</div>
<div class="t" style="left:328px;top:340px;width:300px;text-align:right;line-height:14px;color:#000;font-weight:bold">2 785,50</div>
<div class="t" style="left:433px;top:340px;width:300px;text-align:right;line-height:14px;color:#000;font-weight:bold">2 785,50</div>
<div class="t" style="left:748px;top:340px;width:300px;text-align:right;line-height:14px;color:#000;font-weight:bold">11,000</div>
<div class="t" style="left:853px;top:340px;width:300px;text-align:right;line-height:14px;color:#000;font-weight:bold">11,000</div>
<div style="position:absolute;left:24px;top:342px;width:9px;height:9px;border:1px solid #A8A48E;border-radius:2px;background:linear-gradient(#FFFFFF,#F0ECDC)"></div>
<div style="position:absolute;left:26px;top:347px;width:7px;height:1px;background:#202020;"></div>
<div style="position:absolute;left:29px;top:344px;width:1px;height:7px;background:#202020;"></div>
<div style="position:absolute;left:63px;top:383px;width:1198px;height:1px;background:#B3AF99;"></div>
<div style="position:absolute;left:63px;top:355px;width:1px;height:28px;background:#B3AF99;"></div>
<div style="position:absolute;left:420px;top:355px;width:1px;height:28px;background:#B3AF99;"></div>
<div style="position:absolute;left:525px;top:355px;width:1px;height:28px;background:#B3AF99;"></div>
<div style="position:absolute;left:630px;top:355px;width:1px;height:28px;background:#B3AF99;"></div>
<div style="position:absolute;left:735px;top:355px;width:1px;height:28px;background:#B3AF99;"></div>
<div style="position:absolute;left:840px;top:355px;width:1px;height:28px;background:#B3AF99;"></div>
<div style="position:absolute;left:945px;top:355px;width:1px;height:28px;background:#B3AF99;"></div>
<div style="position:absolute;left:1050px;top:355px;width:1px;height:28px;background:#B3AF99;"></div>
<div style="position:absolute;left:1155px;top:355px;width:1px;height:28px;background:#B3AF99;"></div>
<div style="position:absolute;left:1260px;top:355px;width:1px;height:28px;background:#B3AF99;"></div>
<div class="t" style="left:72px;top:355px;line-height:14px;color:#000;font-weight:bold;letter-spacing:0.07px">Прокат тонколистовой  0,5*1060 мм RAL 6005 (зеленый мох),</div>
<div class="t" style="left:72px;top:369px;line-height:14px;color:#000;font-weight:bold">кг</div>
<div class="t" style="left:328px;top:355px;width:300px;text-align:right;line-height:14px;color:#000;font-weight:bold">16 316,11</div>
<div class="t" style="left:433px;top:355px;width:300px;text-align:right;line-height:14px;color:#CC0000;font-weight:bold">-54 470,88</div>
<div class="t" style="left:538px;top:355px;width:300px;text-align:right;line-height:14px;color:#000;font-weight:bold">70 786,99</div>
<div class="t" style="left:748px;top:355px;width:300px;text-align:right;line-height:14px;color:#000;font-weight:bold">3 704,577</div>
<div class="t" style="left:853px;top:355px;width:300px;text-align:right;line-height:14px;color:#000;font-weight:bold">3 704,577</div>
<div style="position:absolute;left:24px;top:364px;width:9px;height:9px;border:1px solid #A8A48E;border-radius:2px;background:linear-gradient(#FFFFFF,#F0ECDC)"></div>
<div style="position:absolute;left:26px;top:369px;width:7px;height:1px;background:#202020;"></div>
<div style="position:absolute;left:29px;top:375px;width:1px;height:117px;background:#B3AF99;"></div>
<div style="position:absolute;left:63px;top:398px;width:1198px;height:1px;background:#B3AF99;"></div>
<div style="position:absolute;left:63px;top:384px;width:1px;height:14px;background:#B3AF99;"></div>
<div style="position:absolute;left:420px;top:384px;width:1px;height:14px;background:#B3AF99;"></div>
<div style="position:absolute;left:525px;top:384px;width:1px;height:14px;background:#B3AF99;"></div>
<div style="position:absolute;left:630px;top:384px;width:1px;height:14px;background:#B3AF99;"></div>
<div style="position:absolute;left:735px;top:384px;width:1px;height:14px;background:#B3AF99;"></div>
<div style="position:absolute;left:840px;top:384px;width:1px;height:14px;background:#B3AF99;"></div>
<div style="position:absolute;left:945px;top:384px;width:1px;height:14px;background:#B3AF99;"></div>
<div style="position:absolute;left:1050px;top:384px;width:1px;height:14px;background:#B3AF99;"></div>
<div style="position:absolute;left:1155px;top:384px;width:1px;height:14px;background:#B3AF99;"></div>
<div style="position:absolute;left:1260px;top:384px;width:1px;height:14px;background:#B3AF99;"></div>
<div class="t" style="left:79px;top:384px;line-height:14px;color:#000;letter-spacing:-0.055px">Требование-накладная С0000000247 от 13.03.2015 10:00:00</div>
<div class="t" style="left:327px;top:384px;width:300px;text-align:right;line-height:14px;color:#000">13 183,14</div>
<div class="t" style="left:537px;top:384px;width:300px;text-align:right;line-height:14px;color:#000">13 183,14</div>
<div class="t" style="left:747px;top:384px;width:300px;text-align:right;line-height:14px;color:#000">313,000</div>
<div class="t" style="left:957px;top:384px;width:300px;text-align:right;line-height:14px;color:#000">313,000</div>
<div style="position:absolute;left:63px;top:413px;width:1198px;height:1px;background:#B3AF99;"></div>
<div style="position:absolute;left:63px;top:399px;width:1px;height:14px;background:#B3AF99;"></div>
<div style="position:absolute;left:420px;top:399px;width:1px;height:14px;background:#B3AF99;"></div>
<div style="position:absolute;left:525px;top:399px;width:1px;height:14px;background:#B3AF99;"></div>
<div style="position:absolute;left:630px;top:399px;width:1px;height:14px;background:#B3AF99;"></div>
<div style="position:absolute;left:735px;top:399px;width:1px;height:14px;background:#B3AF99;"></div>
<div style="position:absolute;left:840px;top:399px;width:1px;height:14px;background:#B3AF99;"></div>
<div style="position:absolute;left:945px;top:399px;width:1px;height:14px;background:#B3AF99;"></div>
<div style="position:absolute;left:1050px;top:399px;width:1px;height:14px;background:#B3AF99;"></div>
<div style="position:absolute;left:1155px;top:399px;width:1px;height:14px;background:#B3AF99;"></div>
<div style="position:absolute;left:1260px;top:399px;width:1px;height:14px;background:#B3AF99;"></div>
<div class="t" style="left:79px;top:399px;line-height:14px;color:#000;letter-spacing:-0.055px">Требование-накладная С0000000060 от 13.03.2015 10:00:00</div>
<div class="t" style="left:222px;top:399px;width:300px;text-align:right;line-height:14px;color:#000">13 183,14</div>
<div class="t" style="left:327px;top:399px;width:300px;text-align:right;line-height:14px;color:#000">15 658,23</div>
<div class="t" style="left:537px;top:399px;width:300px;text-align:right;line-height:14px;color:#000">28 841,37</div>
<div class="t" style="left:642px;top:399px;width:300px;text-align:right;line-height:14px;color:#000">313,000</div>
<div class="t" style="left:747px;top:399px;width:300px;text-align:right;line-height:14px;color:#000">718,810</div>
<div class="t" style="left:957px;top:399px;width:300px;text-align:right;line-height:14px;color:#000">1 031,810</div>
<div style="position:absolute;left:63px;top:428px;width:1198px;height:1px;background:#B3AF99;"></div>
<div style="position:absolute;left:63px;top:414px;width:1px;height:14px;background:#B3AF99;"></div>
<div style="position:absolute;left:420px;top:414px;width:1px;height:14px;background:#B3AF99;"></div>
<div style="position:absolute;left:525px;top:414px;width:1px;height:14px;background:#B3AF99;"></div>
<div style="position:absolute;left:630px;top:414px;width:1px;height:14px;background:#B3AF99;"></div>
<div style="position:absolute;left:735px;top:414px;width:1px;height:14px;background:#B3AF99;"></div>
<div style="position:absolute;left:840px;top:414px;width:1px;height:14px;background:#B3AF99;"></div>
<div style="position:absolute;left:945px;top:414px;width:1px;height:14px;background:#B3AF99;"></div>
<div style="position:absolute;left:1050px;top:414px;width:1px;height:14px;background:#B3AF99;"></div>
<div style="position:absolute;left:1155px;top:414px;width:1px;height:14px;background:#B3AF99;"></div>
<div style="position:absolute;left:1260px;top:414px;width:1px;height:14px;background:#B3AF99;"></div>
<div class="t" style="left:79px;top:414px;line-height:14px;color:#000;letter-spacing:-0.055px">Требование-накладная С0000000061 от 13.03.2015 10:00:00</div>
<div class="t" style="left:222px;top:414px;width:300px;text-align:right;line-height:14px;color:#000">28 841,37</div>
<div class="t" style="left:327px;top:414px;width:300px;text-align:right;line-height:14px;color:#000">8 286,46</div>
<div class="t" style="left:537px;top:414px;width:300px;text-align:right;line-height:14px;color:#000">37 127,83</div>
<div class="t" style="left:642px;top:414px;width:300px;text-align:right;line-height:14px;color:#000">1 031,810</div>
<div class="t" style="left:747px;top:414px;width:300px;text-align:right;line-height:14px;color:#000">380,400</div>
<div class="t" style="left:957px;top:414px;width:300px;text-align:right;line-height:14px;color:#000">1 412,210</div>
<div style="position:absolute;left:63px;top:443px;width:1198px;height:1px;background:#B3AF99;"></div>
<div style="position:absolute;left:63px;top:429px;width:1px;height:14px;background:#B3AF99;"></div>
<div style="position:absolute;left:420px;top:429px;width:1px;height:14px;background:#B3AF99;"></div>
<div style="position:absolute;left:525px;top:429px;width:1px;height:14px;background:#B3AF99;"></div>
<div style="position:absolute;left:630px;top:429px;width:1px;height:14px;background:#B3AF99;"></div>
<div style="position:absolute;left:735px;top:429px;width:1px;height:14px;background:#B3AF99;"></div>
<div style="position:absolute;left:840px;top:429px;width:1px;height:14px;background:#B3AF99;"></div>
<div style="position:absolute;left:945px;top:429px;width:1px;height:14px;background:#B3AF99;"></div>
<div style="position:absolute;left:1050px;top:429px;width:1px;height:14px;background:#B3AF99;"></div>
<div style="position:absolute;left:1155px;top:429px;width:1px;height:14px;background:#B3AF99;"></div>
<div style="position:absolute;left:1260px;top:429px;width:1px;height:14px;background:#B3AF99;"></div>
<div class="t" style="left:79px;top:429px;line-height:14px;color:#000;letter-spacing:-0.055px">Требование-накладная С0000000064 от 13.03.2015 10:00:00</div>
<div class="t" style="left:222px;top:429px;width:300px;text-align:right;line-height:14px;color:#000">37 127,83</div>
<div class="t" style="left:327px;top:429px;width:300px;text-align:right;line-height:14px;color:#000">8 375,27</div>
<div class="t" style="left:537px;top:429px;width:300px;text-align:right;line-height:14px;color:#000">45 503,10</div>
<div class="t" style="left:642px;top:429px;width:300px;text-align:right;line-height:14px;color:#000">1 412,210</div>
<div class="t" style="left:747px;top:429px;width:300px;text-align:right;line-height:14px;color:#000">384,477</div>
<div class="t" style="left:957px;top:429px;width:300px;text-align:right;line-height:14px;color:#000">1 796,687</div>
<div style="position:absolute;left:63px;top:458px;width:1198px;height:1px;background:#B3AF99;"></div>
<div style="position:absolute;left:63px;top:444px;width:1px;height:14px;background:#B3AF99;"></div>
<div style="position:absolute;left:420px;top:444px;width:1px;height:14px;background:#B3AF99;"></div>
<div style="position:absolute;left:525px;top:444px;width:1px;height:14px;background:#B3AF99;"></div>
<div style="position:absolute;left:630px;top:444px;width:1px;height:14px;background:#B3AF99;"></div>
<div style="position:absolute;left:735px;top:444px;width:1px;height:14px;background:#B3AF99;"></div>
<div style="position:absolute;left:840px;top:444px;width:1px;height:14px;background:#B3AF99;"></div>
<div style="position:absolute;left:945px;top:444px;width:1px;height:14px;background:#B3AF99;"></div>
<div style="position:absolute;left:1050px;top:444px;width:1px;height:14px;background:#B3AF99;"></div>
<div style="position:absolute;left:1155px;top:444px;width:1px;height:14px;background:#B3AF99;"></div>
<div style="position:absolute;left:1260px;top:444px;width:1px;height:14px;background:#B3AF99;"></div>
<div class="t" style="left:79px;top:444px;line-height:14px;color:#000;letter-spacing:-0.055px">Требование-накладная С0000000066 от 13.03.2015 10:00:00</div>
<div class="t" style="left:222px;top:444px;width:300px;text-align:right;line-height:14px;color:#000">45 503,10</div>
<div class="t" style="left:327px;top:444px;width:300px;text-align:right;line-height:14px;color:#000">10 298,61</div>
<div class="t" style="left:537px;top:444px;width:300px;text-align:right;line-height:14px;color:#000">55 801,71</div>
<div class="t" style="left:642px;top:444px;width:300px;text-align:right;line-height:14px;color:#000">1 796,687</div>
<div class="t" style="left:747px;top:444px;width:300px;text-align:right;line-height:14px;color:#000">472,770</div>
<div class="t" style="left:957px;top:444px;width:300px;text-align:right;line-height:14px;color:#000">2 269,457</div>
<div style="position:absolute;left:63px;top:473px;width:1198px;height:1px;background:#B3AF99;"></div>
<div style="position:absolute;left:63px;top:459px;width:1px;height:14px;background:#B3AF99;"></div>
<div style="position:absolute;left:420px;top:459px;width:1px;height:14px;background:#B3AF99;"></div>
<div style="position:absolute;left:525px;top:459px;width:1px;height:14px;background:#B3AF99;"></div>
<div style="position:absolute;left:630px;top:459px;width:1px;height:14px;background:#B3AF99;"></div>
<div style="position:absolute;left:735px;top:459px;width:1px;height:14px;background:#B3AF99;"></div>
<div style="position:absolute;left:840px;top:459px;width:1px;height:14px;background:#B3AF99;"></div>
<div style="position:absolute;left:945px;top:459px;width:1px;height:14px;background:#B3AF99;"></div>
<div style="position:absolute;left:1050px;top:459px;width:1px;height:14px;background:#B3AF99;"></div>
<div style="position:absolute;left:1155px;top:459px;width:1px;height:14px;background:#B3AF99;"></div>
<div style="position:absolute;left:1260px;top:459px;width:1px;height:14px;background:#B3AF99;"></div>
<div class="t" style="left:79px;top:459px;line-height:14px;color:#000;letter-spacing:-0.055px">Требование-накладная С0000000068 от 13.03.2015 10:00:00</div>
<div class="t" style="left:222px;top:459px;width:300px;text-align:right;line-height:14px;color:#000">55 801,71</div>
<div class="t" style="left:327px;top:459px;width:300px;text-align:right;line-height:14px;color:#000">10 453,94</div>
<div class="t" style="left:537px;top:459px;width:300px;text-align:right;line-height:14px;color:#000">66 255,65</div>
<div class="t" style="left:642px;top:459px;width:300px;text-align:right;line-height:14px;color:#000">2 269,457</div>
<div class="t" style="left:747px;top:459px;width:300px;text-align:right;line-height:14px;color:#000">479,901</div>
<div class="t" style="left:957px;top:459px;width:300px;text-align:right;line-height:14px;color:#000">2 749,358</div>
<div style="position:absolute;left:63px;top:488px;width:1198px;height:1px;background:#B3AF99;"></div>
<div style="position:absolute;left:63px;top:474px;width:1px;height:14px;background:#B3AF99;"></div>
<div style="position:absolute;left:420px;top:474px;width:1px;height:14px;background:#B3AF99;"></div>
<div style="position:absolute;left:525px;top:474px;width:1px;height:14px;background:#B3AF99;"></div>
<div style="position:absolute;left:630px;top:474px;width:1px;height:14px;background:#B3AF99;"></div>
<div style="position:absolute;left:735px;top:474px;width:1px;height:14px;background:#B3AF99;"></div>
<div style="position:absolute;left:840px;top:474px;width:1px;height:14px;background:#B3AF99;"></div>
<div style="position:absolute;left:945px;top:474px;width:1px;height:14px;background:#B3AF99;"></div>
<div style="position:absolute;left:1050px;top:474px;width:1px;height:14px;background:#B3AF99;"></div>
<div style="position:absolute;left:1155px;top:474px;width:1px;height:14px;background:#B3AF99;"></div>
<div style="position:absolute;left:1260px;top:474px;width:1px;height:14px;background:#B3AF99;"></div>
<div class="t" style="left:79px;top:474px;line-height:14px;color:#000;letter-spacing:-0.055px">Требование-накладная С0000000113 от 13.03.2015 10:00:00</div>
<div class="t" style="left:222px;top:474px;width:300px;text-align:right;line-height:14px;color:#000">66 255,65</div>
<div class="t" style="left:327px;top:474px;width:300px;text-align:right;line-height:14px;color:#000">7 306,62</div>
<div class="t" style="left:537px;top:474px;width:300px;text-align:right;line-height:14px;color:#000">73 562,27</div>
<div class="t" style="left:642px;top:474px;width:300px;text-align:right;line-height:14px;color:#000">2 749,358</div>
<div class="t" style="left:747px;top:474px;width:300px;text-align:right;line-height:14px;color:#000">335,419</div>
<div class="t" style="left:957px;top:474px;width:300px;text-align:right;line-height:14px;color:#000">3 084,777</div>
<div style="position:absolute;left:63px;top:489px;width:1px;height:3px;background:#B3AF99;"></div>
<div style="position:absolute;left:420px;top:489px;width:1px;height:3px;background:#B3AF99;"></div>
<div style="position:absolute;left:525px;top:489px;width:1px;height:3px;background:#B3AF99;"></div>
<div style="position:absolute;left:630px;top:489px;width:1px;height:3px;background:#B3AF99;"></div>
<div style="position:absolute;left:735px;top:489px;width:1px;height:3px;background:#B3AF99;"></div>
<div style="position:absolute;left:840px;top:489px;width:1px;height:3px;background:#B3AF99;"></div>
<div style="position:absolute;left:945px;top:489px;width:1px;height:3px;background:#B3AF99;"></div>
<div style="position:absolute;left:1050px;top:489px;width:1px;height:3px;background:#B3AF99;"></div>
<div style="position:absolute;left:1155px;top:489px;width:1px;height:3px;background:#B3AF99;"></div>
<div style="position:absolute;left:1260px;top:489px;width:1px;height:3px;background:#B3AF99;"></div>
</div></body></html>
